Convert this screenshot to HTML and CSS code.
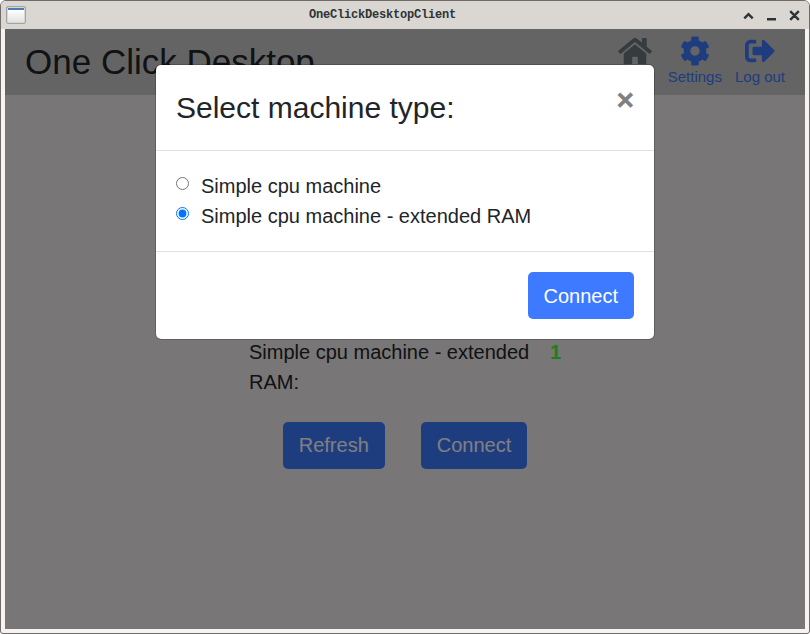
FILE: index.html
```html
<!DOCTYPE html>
<html lang="en">
<head>
<meta charset="utf-8">
<title>OneClickDesktopClient</title>
<link rel="stylesheet" href="styles.css">
</head>
<body>
<div class="window">
  <div class="titlebar">
    <span class="app-icon"></span>
    <span class="window-title">OneClickDesktopClient</span>
    <svg class="window-controls" width="60" height="14" viewBox="0 0 60 14" fill="none" stroke="#2e3436" stroke-width="2.4">
      <path d="M2.3 10.3 6.5 6.1l4.2 4.2M25 11.2h9M48.2 3.2l8.6 8.6m0-8.6-8.6 8.6"/>
    </svg>
  </div>
  <div class="app">
    <header class="navbar">
      <h1 class="brand">One Click Desktop</h1>
      <nav class="nav">
        <a class="nav-item active">
          <svg width="34" height="30" viewBox="0 0 576 512" fill="currentColor"><path d="M280.37 148.26L96 300.11V464a16 16 0 0 0 16 16l112.06-.29a16 16 0 0 0 15.92-16V368a16 16 0 0 1 16-16h64a16 16 0 0 1 16 16v95.64a16 16 0 0 0 16 16.05L464 480a16 16 0 0 0 16-16V300L295.67 148.26a12.19 12.19 0 0 0-15.3 0zM571.6 251.47L488 182.56V44.05a12 12 0 0 0-12-12h-56a12 12 0 0 0-12 12v72.61L318.47 43a48 48 0 0 0-61 0L4.34 251.47a12 12 0 0 0-1.6 16.9l25.5 31A12 12 0 0 0 45.15 301l235.22-193.74a12.19 12.19 0 0 1 15.3 0L530.9 301a12 12 0 0 0 16.9-1.6l25.5-31a12 12 0 0 0-1.7-16.93z"/></svg>
          <span>Home</span>
        </a>
        <a class="nav-item">
          <svg width="30" height="30" viewBox="0 0 512 512" fill="currentColor"><path d="M487.4 315.7l-42.6-24.6c4.3-23.2 4.3-47 0-70.2l42.6-24.6c4.9-2.8 7.1-8.6 5.5-14-11.1-35.6-30-67.8-54.7-94.6-3.8-4.1-10-5.1-14.8-2.3L380.8 110c-17.9-15.4-38.5-27.3-60.8-35.1V25.8c0-5.6-3.9-10.5-9.4-11.7-36.7-8.2-74.3-7.8-109.2 0-5.5 1.2-9.4 6.1-9.4 11.7V75c-22.2 7.9-42.8 19.8-60.8 35.1L88.7 85.5c-4.9-2.8-11-1.9-14.8 2.3-24.7 26.7-43.6 58.9-54.7 94.6-1.7 5.4.6 11.2 5.5 14L67.3 221c-4.3 23.2-4.3 47 0 70.2l-42.6 24.6c-4.9 2.8-7.1 8.6-5.5 14 11.1 35.6 30 67.8 54.7 94.6 3.8 4.1 10 5.1 14.8 2.3l42.6-24.6c17.9 15.4 38.5 27.3 60.8 35.1v49.2c0 5.6 3.9 10.5 9.4 11.7 36.7 8.2 74.3 7.8 109.2 0 5.5-1.2 9.4-6.1 9.4-11.7v-49.2c22.2-7.9 42.8-19.8 60.8-35.1l42.6 24.6c4.9 2.8 11 1.9 14.8-2.3 24.7-26.7 43.6-58.9 54.7-94.6 1.5-5.5-.7-11.3-5.6-14.1zM256 336c-44.1 0-80-35.9-80-80s35.9-80 80-80 80 35.9 80 80-35.9 80-80 80z"/></svg>
          <span>Settings</span>
        </a>
        <a class="nav-item">
          <svg width="30" height="30" viewBox="0 0 512 512" fill="currentColor"><path d="M497 273L329 441c-15 15-41 4.5-41-17v-96H152c-13.3 0-24-10.7-24-24v-96c0-13.3 10.7-24 24-24h136V88c0-21.4 25.9-32 41-17l168 168c9.3 9.4 9.3 24.6 0 34zM192 436v-40c0-6.6-5.4-12-12-12H96c-17.7 0-32-14.3-32-32V160c0-17.7 14.3-32 32-32h84c6.6 0 12-5.4 12-12V76c0-6.6-5.4-12-12-12H96c-53 0-96 43-96 96v192c0 53 43 96 96 96h84c6.6 0 12-5.4 12-12z"/></svg>
          <span>Log out</span>
        </a>
      </nav>
    </header>
    <main class="content">
      <div class="machine-row">
        <span class="machine-name">Simple cpu machine - extended RAM:</span>
        <span class="machine-count">1</span>
      </div>
      <div class="actions">
        <button class="btn">Refresh</button>
        <button class="btn">Connect</button>
      </div>
    </main>
    <div class="backdrop">
      <div class="modal">
        <div class="modal-header">
          <h2 class="modal-title">Select machine type:</h2>
          <button class="close">×</button>
        </div>
        <div class="modal-body">
          <label class="option"><input type="radio" name="machine"><span>Simple cpu machine</span></label>
          <label class="option"><input type="radio" name="machine" checked><span>Simple cpu machine - extended RAM</span></label>
        </div>
        <div class="modal-footer">
          <button class="btn">Connect</button>
        </div>
      </div>
    </div>
  </div>
</div>
</body>
</html>
```
FILE: styles.css
```css
* { box-sizing: border-box; }

body {
  margin: 0;
  background: #fff;
  color: #212529;
  font: 20px/1.5 "Liberation Sans", Arial, sans-serif;
}

h1, h2 { margin: 0; font-weight: 400; }

.window {
  display: flex;
  flex-direction: column;
  width: 810px;
  height: 634px;
  border: 1px solid #706a69;
  border-radius: 6px 6px 3px 3px;
  background: #f6f4f2;
  overflow: hidden;
}

.titlebar {
  display: grid;
  grid-template-columns: 80px 1fr 80px;
  align-items: center;
  height: 28px;
  padding: 0 7px 0 5px;
  background: #dad6d2;
}

.app-icon {
  width: 20px;
  height: 18px;
  border: 1px solid #a2a5a0;
  border-radius: 2px;
  background: linear-gradient(#4f79b3 0 3px, #fff 3px, #e0e1df);
  box-shadow: inset 0 0 0 1px #d5d7d2;
}

.window-title {
  padding-right: 43px;
  color: #2e3436;
  font: bold 12px/14px "Liberation Mono", monospace;
  letter-spacing: -0.2px;
  text-align: center;
}

.window-controls { justify-self: end; }

.app {
  position: relative;
  display: flex;
  flex-direction: column;
  height: 600px;
  margin: 0 4px;
  background: #f1edee;
}

.navbar {
  display: flex;
  justify-content: space-between;
  height: 66px;
  padding: 7px 20px 0;
  background: #c8c8c8;
}

.brand { font-size: 35px; line-height: 52px; }

.nav { display: flex; gap: 13px; }

.nav-item {
  display: flex;
  flex-direction: column;
  align-items: center;
  color: #3d7aff;
  font-size: 15px;
  line-height: 22px;
}

.nav-item.active { color: #6c777d; }

.content { padding: 242px 244px 0; }

.machine-row { display: flex; gap: 20px; }

.machine-name { width: 281px; }

.machine-count { color: #3cff3c; font-weight: 700; }

.actions {
  display: flex;
  justify-content: center;
  gap: 36px;
  margin-top: 25px;
}

.btn {
  height: 47px;
  padding: 0 16px;
  border: 0;
  border-radius: 5px;
  background: #3d7aff;
  color: #fff;
  font: inherit;
}

.actions .btn { padding-bottom: 2px; }

.backdrop {
  position: absolute;
  inset: 0;
  display: flex;
  align-items: flex-start;
  justify-content: center;
  padding-top: 35px;
  background: rgba(0, 0, 0, 0.5);
}

.modal {
  width: 500px;
  border: 1px solid rgba(0, 0, 0, 0.2);
  border-radius: 6px;
  background: #fff;
  background-clip: padding-box;
}

.modal-header {
  display: flex;
  justify-content: space-between;
  height: 86px;
  padding: 20px;
  border-bottom: 1px solid #dee2e6;
}

.modal-title { font-size: 30px; line-height: 45px; }

.close {
  height: 30px;
  padding: 0;
  border: 0;
  background: none;
  color: #7f7f7f;
  font: bold 30px/30px "Liberation Sans", Arial, sans-serif;
  -webkit-text-stroke: 0.4px #7f7f7f;
}

.modal-body { padding: 20px; }

.option { display: flex; }

.option input {
  width: 13px;
  height: 13px;
  margin: 6px 12px 0 0;
}

.modal-footer {
  display: flex;
  justify-content: flex-end;
  padding: 20px;
  border-top: 1px solid #dee2e6;
}
```
